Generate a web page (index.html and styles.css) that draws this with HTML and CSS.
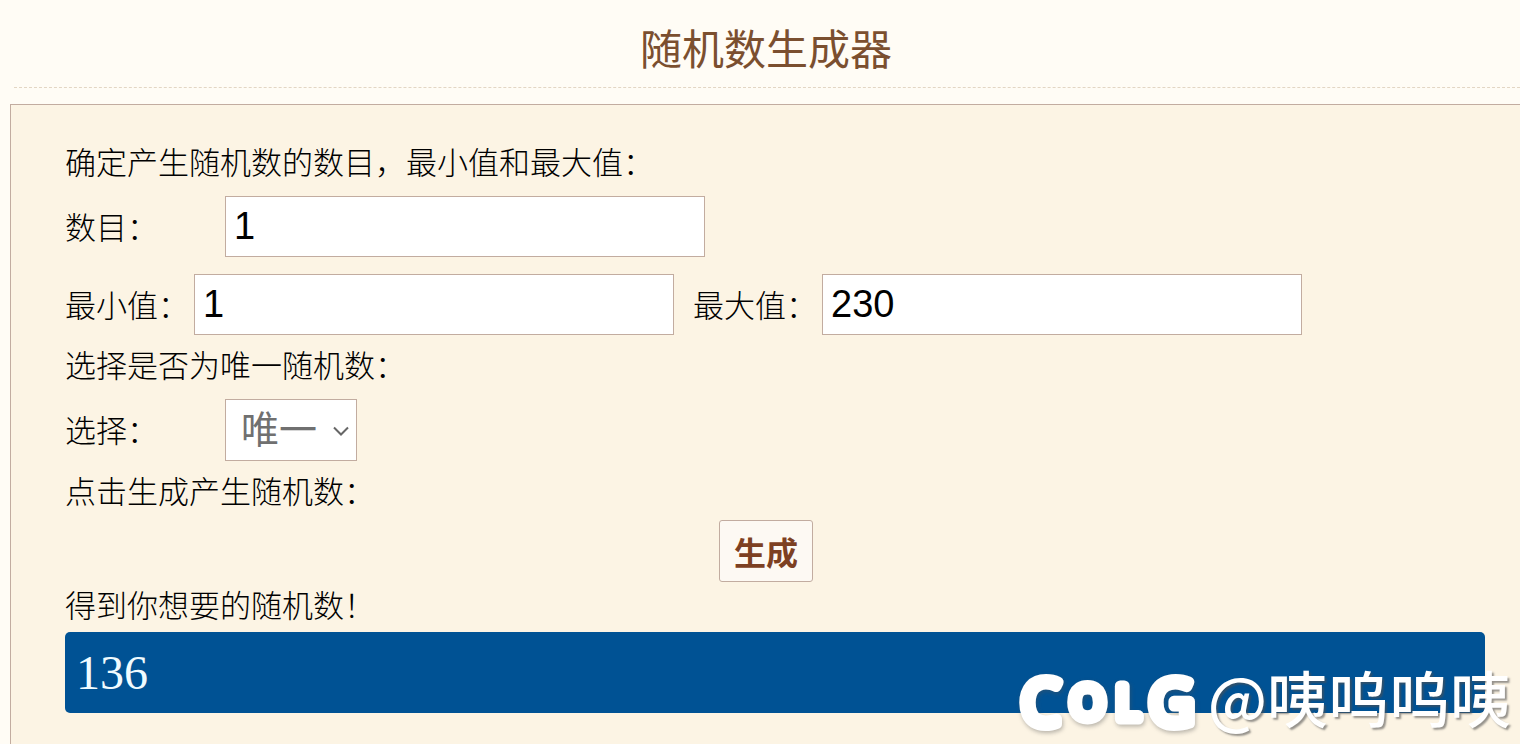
FILE: index.html
```html
<!DOCTYPE html>
<html lang="zh-CN">
<head>
    <meta charset="UTF-8">
    <meta name="viewport" content="width=device-width, initial-scale=1.0">
    <title>随机数生成器</title>
    <link rel="stylesheet" href="styles.css">
</head>
<body>

<h1>随机数生成器</h1>

<form id="generator" onsubmit="return false">
    <p class="note">确定产生随机数的数目，最小值和最大值：</p>
    <div class="fields">
        <div class="row">
            <label class="wide" for="count">数目：</label>
            <input type="text" id="count" value="1">
        </div>
        <div class="row">
            <label for="min">最小值：</label>
            <input type="text" id="min" value="1">
            <label class="second" for="max">最大值：</label>
            <input type="text" id="max" value="230">
        </div>
    </div>

    <p class="note">选择是否为唯一随机数：</p>
    <div class="fields">
        <div class="row">
            <label class="wide" for="unique">选择：</label>
            <div class="select-box">
                <select id="unique">
                    <option>唯一</option>
                </select>
                <svg viewBox="0 0 16 10" aria-hidden="true"><path d="M1 1.5 L8 8.5 L15 1.5"/></svg>
            </div>
        </div>
    </div>

    <p class="note">点击生成产生随机数：</p>
    <div class="actions">
        <button type="button" id="generate">生成</button>
    </div>

    <p class="note">得到你想要的随机数！</p>
    <output id="result" for="count min max unique">136</output>
</form>

<div class="watermark">
    <svg class="logo" viewBox="0 0 190 76">
        <text class="big" x="3" y="66">C</text>
        <text class="small" x="52" y="60">O</text>
        <text class="small" x="98" y="60">L</text>
        <text class="big" x="131" y="66">G</text>
    </svg>
    <span>@咦呜呜咦</span>
</div>

</body>
</html>
```
FILE: styles.css
```css
* {
    box-sizing: border-box;
}

body {
    display: flex;
    flex-direction: column;
    position: relative;
    min-height: 100vh;
    margin: 0;
    padding-left: 10px;
    background-color: #fffcf5;
    color: #000;
    font-family: "Liberation Sans", "Noto Sans CJK SC", sans-serif;
    overflow-x: hidden;
}

h1 {
    margin: 0 0 16px 4px;
    padding: 19px 2px 4px 0;
    border-bottom: 1px dashed #e3d6c4;
    color: #7b4f2f;
    font-size: 42px;
    font-weight: 400;
    line-height: 64px;
    text-align: center;
}

#generator {
    flex: 1;
    padding: 34px 35px 31px 54px;
    border: 1px solid #c2aca0;
    border-width: 1px 0 0 1px;
    background-color: #fcf4e4;
    font-size: 31px;
    font-weight: 300;
}

.note {
    margin: 0;
    line-height: 50px;
}

.fields {
    display: flex;
    flex-direction: column;
    gap: 17px;
    padding: 7px 0;
}

.row {
    display: flex;
    align-items: center;
}

label {
    flex: none;
    width: 129px;
    padding-top: 4px;
    line-height: 50px;
}

label.wide {
    width: 160px;
}

label.second {
    margin-left: 19px;
}

input,
select {
    height: 61px;
    border: 1px solid #c2aca0;
    border-radius: 0;
    background-color: #fff;
    font-family: inherit;
    font-size: 38px;
}

input {
    width: 480px;
    min-width: 0;
    padding: 0 8px;
    color: #000;
}

.select-box {
    position: relative;
}

select {
    display: block;
    width: 132px;
    height: 62px;
    padding: 0 15px;
    color: #707070;
    appearance: none;
}

.select-box svg {
    position: absolute;
    top: 27px;
    right: 8px;
    width: 16px;
    height: 10px;
    fill: none;
    stroke: #666;
    stroke-width: 2;
    pointer-events: none;
}

.actions {
    padding: 2px 18px 0 0;
    text-align: center;
}

button {
    display: inline-block;
    width: 94px;
    height: 62px;
    padding: 0;
    border: 1px solid #c2aca0;
    border-radius: 3px;
    background-color: #fdf9f3;
    color: #7d4022;
    font-family: inherit;
    font-size: 32px;
    font-weight: 700;
    vertical-align: top;
}

#result {
    display: block;
    padding: 0 11px;
    border-radius: 5px;
    background-color: #005294;
    color: #f0fbff;
    font-family: "Liberation Serif", serif;
    font-size: 48px;
    font-weight: 400;
    line-height: 81px;
}

.watermark {
    display: flex;
    align-items: center;
    position: absolute;
    right: 9px;
    bottom: 3px;
    color: #fff;
    font-family: "Noto Sans CJK SC", sans-serif;
    font-size: 61px;
    font-weight: 500;
    line-height: 88px;
    text-shadow: 2px 2px 2px rgba(80, 80, 80, 0.6);
    pointer-events: none;
}

.logo {
    width: 190px;
    height: 76px;
    overflow: visible;
    fill: #fff;
    stroke: #fff;
    stroke-linejoin: round;
    stroke-width: 11px;
    font-family: "Open Sans", sans-serif;
    font-weight: 400;
    text-shadow: none;
    filter: drop-shadow(1px 2px 2px rgba(80, 80, 80, 0.4));
}

.logo .big {
    font-size: 62px;
}

.logo .small {
    font-size: 45px;
}
```
